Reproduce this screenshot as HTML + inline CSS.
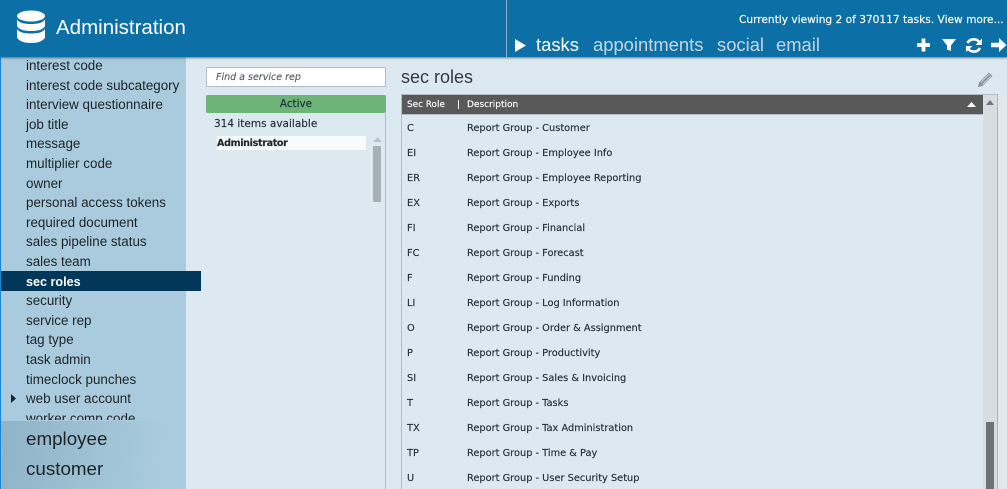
<!DOCTYPE html>
<html><head><meta charset="utf-8">
<style>
html,body{margin:0;padding:0;width:1007px;height:489px;overflow:hidden;background:#dce9f0;font-family:"Liberation Sans",sans-serif}
div,span{position:absolute;white-space:nowrap}
.t{font-family:"DejaVu Sans",sans-serif;font-size:9.8px;color:#1f2d38;line-height:14px;-webkit-text-stroke:.15px currentColor}
.s{left:26px;font-size:13.4px;color:#1e2327;line-height:18px;height:18px}
.r{left:407px}
.d{left:467px}
.n{top:34px;font-size:18.4px;line-height:22px;color:#c9d6df}
</style></head><body>
<div style="left:0;top:57px;width:186px;height:432px;background:#a9cbdd"></div>
<div style="left:0;top:57px;width:1px;height:432px;background:#1b86d0"></div>
<div style="left:0;top:57px;width:186px;height:363px;overflow:hidden">
<div class="s" style="top:0px">interest code</div>
<div class="s" style="top:20px">interest code subcategory</div>
<div class="s" style="top:39px">interview questionnaire</div>
<div class="s" style="top:59px">job title</div>
<div class="s" style="top:78px">message</div>
<div class="s" style="top:98px">multiplier code</div>
<div class="s" style="top:118px">owner</div>
<div class="s" style="top:137px">personal access tokens</div>
<div class="s" style="top:157px">required document</div>
<div class="s" style="top:176px">sales pipeline status</div>
<div class="s" style="top:196px">sales team</div>
<div class="s" style="top:235px">security</div>
<div class="s" style="top:255px">service rep</div>
<div class="s" style="top:274px">tag type</div>
<div class="s" style="top:294px">task admin</div>
<div class="s" style="top:314px">timeclock punches</div>
<div class="s" style="top:333px">web user account</div>
<div class="s" style="top:353px">worker comp code</div>
</div>
<div style="left:1px;top:271px;width:200px;height:20px;background:#03375a"></div>
<div class="s" style="top:273px;color:#fff;font-weight:bold;font-size:12.6px">sec roles</div>
<svg style="position:absolute;left:10px;top:394px" width="7" height="9"><path d="M1 0L6 4.500L1 9Z" fill="#15222c"/></svg>
<div style="left:1px;top:421px;width:185px;height:68px;background:linear-gradient(100deg,#8fb3c7,#a9cbdd 85%)"></div>
<div class="s" style="top:429px;font-size:18.8px;line-height:20px;height:20px">employee</div>
<div class="s" style="top:459px;font-size:18.8px;line-height:20px;height:20px">customer</div>

<div style="left:0;top:0;width:1007px;height:57px;background:#0c6fa6;box-shadow:0 1px 2px rgba(40,50,60,.6)"></div>
<div style="left:506px;top:0;width:1px;height:57px;background:#8ab4cf"></div>
<svg style="position:absolute;left:16px;top:10px" width="30" height="34" viewBox="0 0 30 34"><g fill="#fff"><ellipse cx="15" cy="6" rx="14" ry="5.500"/><path d="M1 9.500C3 13 9 14 15 14S27 13 29 9.500V16C27 20 21 21 15 21S3 20 1 16Z"/><path d="M1 19C3 22.500 9 23.500 15 23.500S27 22.500 29 19V27.500C27 31.500 21 33 15 33S3 31.500 1 27.500Z"/></g></svg>
<div style="left:56px;top:16px;font-size:20.5px;line-height:24px;color:#fff">Administration</div>
<div class="t" style="left:739px;top:13px;color:#fff;font-size:10.6px">Currently viewing 2 of 370117 tasks. View more...</div>
<svg style="position:absolute;left:515px;top:39px" width="12" height="13"><path d="M0 0L11 6.500L0 13Z" fill="#fff"/></svg>
<div class="n" style="left:536px;color:#fff">tasks</div>
<div class="n" style="left:593px">appointments</div>
<div class="n" style="left:717px">social</div>
<div class="n" style="left:776px">email</div>
<svg style="position:absolute;left:916px;top:38px" width="91" height="15" viewBox="0 0 91 15"><path d="M1 7H14M7.500 .5V13.500" stroke="#fff" stroke-width="3.800" fill="none"/><path d="M26 1H40L35 7.500V13L31 11.500V7.500Z" fill="#fff"/><path d="M63.500 4.500A7 7 0 0 0 51.500 5M51.500 9.500A7 7 0 0 0 64 10" stroke="#fff" stroke-width="2.600" fill="none"/><path d="M66 .5V7H59.500ZM50 14V8H56.500Z" fill="#fff"/><path d="M75 7H84" stroke="#fff" stroke-width="4.500" fill="none"/><path d="M83 0L90.500 7L83 14Z" fill="#fff"/></svg>

<div style="left:206px;top:67px;width:178px;height:18px;background:#fff;border:1px solid #b5bdc2"></div>
<div class="t" style="left:216px;top:71px;font-style:italic;color:#55606a;font-size:9.500px">Find a service rep</div>
<div style="left:206px;top:95px;width:180px;height:18px;background:#6db478;border-radius:2px"></div>
<div class="t" style="left:206px;top:97px;width:180px;text-align:center;font-size:10.4px">Active</div>
<div style="left:385px;top:113px;width:1px;height:376px;background:#b5bdc2"></div>
<div class="t" style="left:214px;top:117px;font-size:10.5px">314 items available</div>
<div style="left:217px;top:136px;width:149px;height:14px;background:#f8fbfc"></div>
<div class="t" style="left:217px;top:137px;font-weight:bold;font-size:9.600px;letter-spacing:-.35px;color:#20292f">Administrator</div>
<svg style="position:absolute;left:373px;top:137px" width="9" height="5"><path d="M0 5L4.500 0L9 5Z" fill="#b9c2c8"/></svg>
<div style="left:373px;top:146px;width:8px;height:56px;background:#a8b0b5"></div>

<div style="left:401px;top:66px;font-size:18px;line-height:22px;color:#33393e">sec roles</div>
<svg style="position:absolute;left:977px;top:71px" width="17" height="17" viewBox="0 0 17 17"><path d="M1 16L2 11.500L12 1.500L15.500 5L5.500 15Z" fill="#8b9399"/><path d="M3.500 11.500L12.500 3M5.500 13.500L14 5" stroke="#dce9f0" stroke-width=".7"/></svg>

<div style="left:401px;top:94px;width:596px;height:1px;background:#b5bdc2"></div>
<div style="left:401px;top:94px;width:1px;height:395px;background:#b5bdc2"></div>
<div style="left:997px;top:94px;width:1px;height:395px;background:#b0b4b8"></div>
<div style="left:998px;top:94px;width:9px;height:395px;background:#e0e8f0"></div>
<div style="left:402px;top:95px;width:581px;height:19px;background:#595959"></div>
<div style="left:402px;top:114px;width:581px;height:1px;background:#b5bdc2"></div>
<div class="t" style="left:407px;top:98px;color:#fff;font-size:8.900px">Sec Role</div>
<div style="left:458px;top:100px;width:1px;height:9px;background:#fff"></div>
<div class="t" style="left:467px;top:98px;color:#fff;font-size:9px">Description</div>
<svg style="position:absolute;left:967px;top:102px" width="9" height="5"><path d="M0 5L4.500 0L9 5Z" fill="#fff"/></svg>
<div style="left:983px;top:95px;width:14px;height:394px;background:#d8dde0"></div>
<svg style="position:absolute;left:986px;top:100px" width="8" height="5"><path d="M0 5L4 0L8 5Z" fill="#70767a"/></svg>
<div style="left:986px;top:422px;width:8px;height:67px;background:#6e7173"></div>

<div class="t r" style="top:122px">C</div><div class="t d" style="top:122px">Report Group - Customer</div>
<div class="t r" style="top:147px">EI</div><div class="t d" style="top:147px">Report Group - Employee Info</div>
<div class="t r" style="top:172px">ER</div><div class="t d" style="top:172px">Report Group - Employee Reporting</div>
<div class="t r" style="top:197px">EX</div><div class="t d" style="top:197px">Report Group - Exports</div>
<div class="t r" style="top:222px">FI</div><div class="t d" style="top:222px">Report Group - Financial</div>
<div class="t r" style="top:247px">FC</div><div class="t d" style="top:247px">Report Group - Forecast</div>
<div class="t r" style="top:272px">F</div><div class="t d" style="top:272px">Report Group - Funding</div>
<div class="t r" style="top:297px">LI</div><div class="t d" style="top:297px">Report Group - Log Information</div>
<div class="t r" style="top:322px">O</div><div class="t d" style="top:322px">Report Group - Order &amp; Assignment</div>
<div class="t r" style="top:347px">P</div><div class="t d" style="top:347px">Report Group - Productivity</div>
<div class="t r" style="top:372px">SI</div><div class="t d" style="top:372px">Report Group - Sales &amp; Invoicing</div>
<div class="t r" style="top:397px">T</div><div class="t d" style="top:397px">Report Group - Tasks</div>
<div class="t r" style="top:422px">TX</div><div class="t d" style="top:422px">Report Group - Tax Administration</div>
<div class="t r" style="top:447px">TP</div><div class="t d" style="top:447px">Report Group - Time &amp; Pay</div>
<div class="t r" style="top:472px">U</div><div class="t d" style="top:472px">Report Group - User Security Setup</div>
</body></html>
